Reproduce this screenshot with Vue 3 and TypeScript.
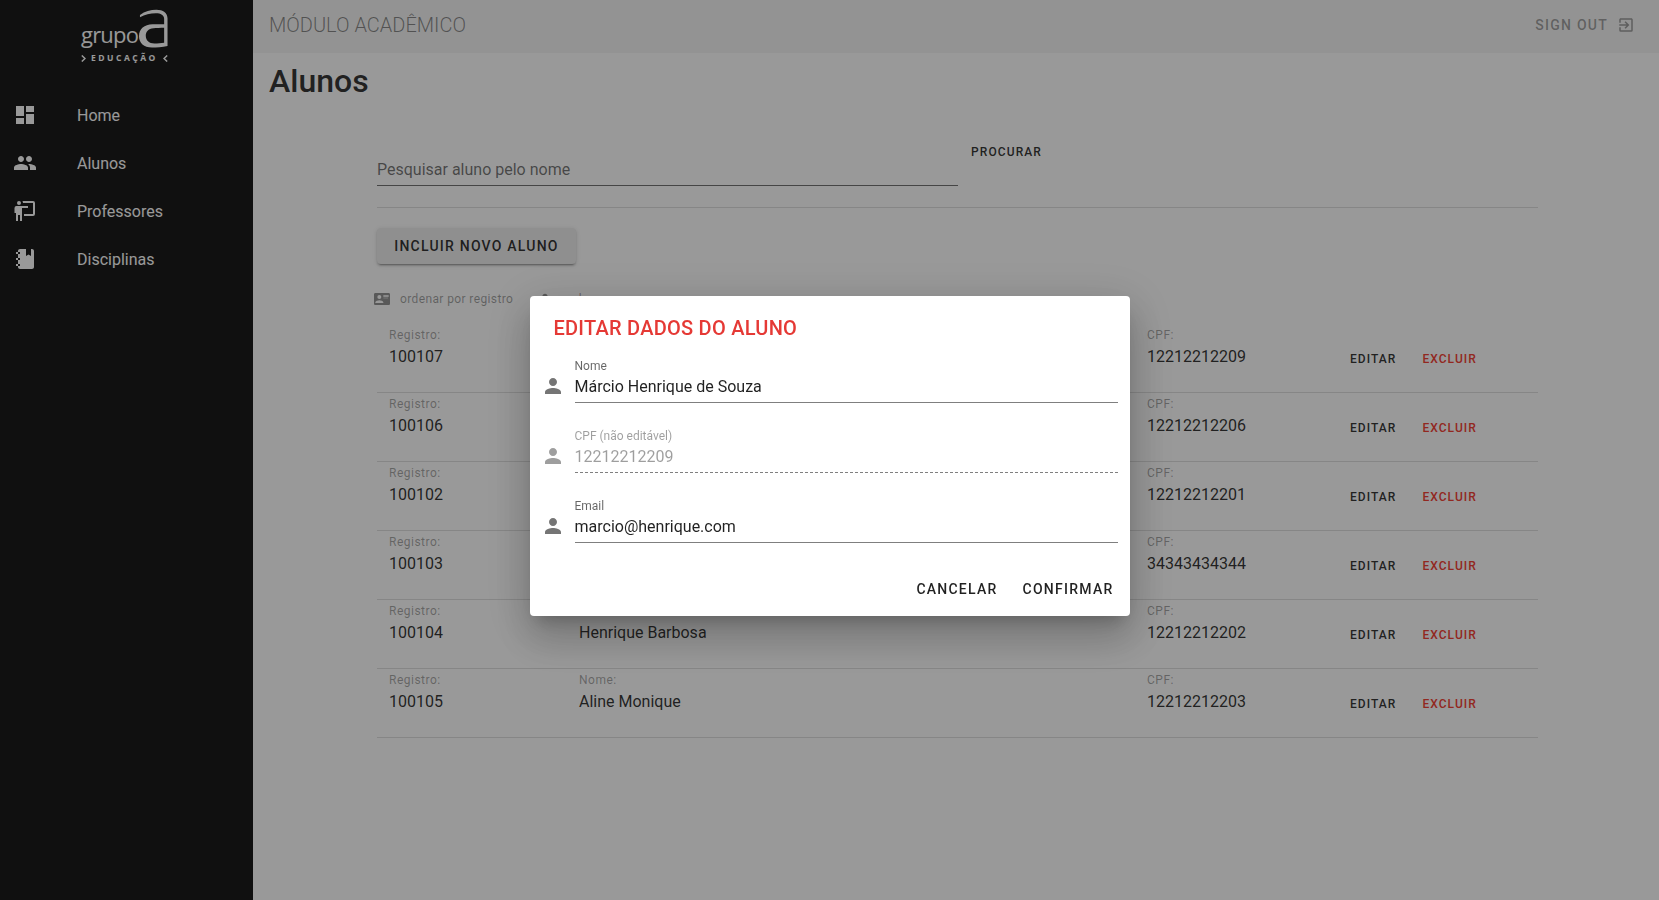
<script setup lang="ts">
import { ref } from "vue";

const menu = [
  { label: "Home", icon: "M3 13h8V3H3v10zm0 8h8v-6H3v6zm10 0h8V11h-8v10zm0-18v6h8V3h-8z" },
  { label: "Alunos", icon: "M16 11c1.66 0 2.99-1.34 2.99-3S17.66 5 16 5c-1.66 0-3 1.34-3 3s1.34 3 3 3zm-8 0c1.66 0 2.99-1.34 2.99-3S9.66 5 8 5C6.34 5 5 6.34 5 8s1.34 3 3 3zm0 2c-2.33 0-7 1.17-7 3.5V19h14v-2.5c0-2.33-4.67-3.5-7-3.5zm8 0c-.29 0-.62.02-.97.05 1.16.84 1.97 1.97 1.97 3.45V19h6v-2.5c0-2.33-4.67-3.5-7-3.5z" },
  { label: "Professores", icon: "M20,17A2,2 0 0,0 22,15V4A2,2 0 0,0 20,2H9.46C9.81,2.61 10,3.3 10,4H20V15H11V17M15,7V9H9V22H7V16H5V22H3V14H1.5V9A2,2 0 0,1 3.5,7H15M8,4A2,2 0 0,1 6,6A2,2 0 0,1 4,4A2,2 0 0,1 6,2A2,2 0 0,1 8,4Z" },
  { label: "Disciplinas", icon: "M3,7V5H5V4C5,2.89 5.9,2 7,2H13V9L15.5,7.5L18,9V2H19C20.05,2 21,2.95 21,4V20C21,21.05 20.05,22 19,22H7C5.95,22 5,21.05 5,20V19H3V17H5V13H3V11H5V7H3M7,11H5V13H7V11M7,7V5H5V7H7M7,19V17H5V19H7Z" },
];

const personIcon = "M12 12c2.21 0 4-1.79 4-4s-1.79-4-4-4-4 1.79-4 4 1.79 4 4 4zm0 2c-2.67 0-8 1.34-8 4v2h16v-2c0-2.66-5.33-4-8-4z";
const cardIcon = "M2,3H22C23.05,3 24,3.95 24,5V19C24,20.05 23.05,21 22,21H2C0.95,21 0,20.05 0,19V5C0,3.95 0.95,3 2,3M14,6V7H22V6H14M14,8V9H21.5L22,9V8H14M14,10V11H21V10H14M8,13.91C6,13.91 2,15 2,17V18H14V17C14,15 10,13.91 8,13.91M8,6A3,3 0 0,0 5,9A3,3 0 0,0 8,12A3,3 0 0,0 11,9A3,3 0 0,0 8,6Z";
const exitIcon = "M19,3H5C3.89,3 3,3.89 3,5V9H5V5H19V19H5V15H3V19A2,2 0 0,0 5,21H19A2,2 0 0,0 21,19V5C21,3.89 20.1,3 19,3M10.08,15.58L11.5,17L16.5,12L11.5,7L10.08,8.41L12.67,11H3V13H12.67L10.08,15.58Z";

const alunos = [
  { registro: 100107, nome: "Márcio Henrique de Souza", cpf: "12212212209" },
  { registro: 100106, nome: "Carla Regina", cpf: "12212212206" },
  { registro: 100102, nome: "Maria Helena", cpf: "12212212201" },
  { registro: 100103, nome: "João Carlos", cpf: "34343434344" },
  { registro: 100104, nome: "Henrique Barbosa", cpf: "12212212202" },
  { registro: 100105, nome: "Aline Monique", cpf: "12212212203" },
];

const nome = ref("Márcio Henrique de Souza");
const email = ref("marcio@henrique.com");
</script>

<template>
  <div class="shell">
    <aside class="sidebar">
      <div class="logo">
        <div class="logo-top">
          <span class="logo-grupo">grupo</span>
          <svg class="logo-a" width="29" height="40" viewBox="0 0 30 40">
            <path fill-rule="evenodd" d="M1 5.5C6 1.5 12 0 18 0C25 0 29.5 3.5 29.5 9V37.6C24 38.6 18 39.2 13.5 39.2C5 39.2 0 34.5 0 27.5C0 20 5.5 15.6 14 15.2C18 15 22 15 26 15V9.5C26 5.5 22.5 3.6 17.5 3.6C11.5 3.6 6 5 1 7.8ZM26 18.6C22 18.6 18 18.8 15 19.2C9.5 19.8 7 22.8 7 27C7 31.6 10.2 35 16 35C19.5 35 23 34.7 26 34.2Z" />
          </svg>
        </div>
        <div class="logo-sub">
          <svg width="5" height="7" viewBox="0 0 5 7"><path d="M0.8 0.5L4 3.5L0.8 6.5" /></svg>
          <span>EDUCAÇÃO</span>
          <svg width="5" height="7" viewBox="0 0 5 7"><path d="M4.2 0.5L1 3.5L4.2 6.5" /></svg>
        </div>
      </div>
      <nav class="menu">
        <a v-for="item in menu" :key="item.label" class="menu-item">
          <svg class="menu-icon" viewBox="0 0 24 24"><path :d="item.icon" /></svg>
          <span>{{ item.label }}</span>
        </a>
      </nav>
    </aside>

    <div class="main">
      <header class="appbar">
        <span class="appbar-title">MÓDULO ACADÊMICO</span>
        <button class="signout">
          SIGN OUT
          <svg viewBox="0 0 24 24"><path :d="exitIcon" /></svg>
        </button>
      </header>

      <section class="page">
        <h1>Alunos</h1>

        <div class="content">
          <div class="search">
            <div class="search-field">Pesquisar aluno pelo nome</div>
            <button class="search-btn">PROCURAR</button>
          </div>

          <button class="add-btn">INCLUIR NOVO ALUNO</button>

          <div class="sort">
            <span class="sort-item"><svg viewBox="0 0 24 24"><path :d="cardIcon" /></svg>ordenar por registro</span>
            <span class="sort-item"><svg viewBox="0 0 24 24"><path :d="personIcon" /></svg>ordenar por nome</span>
          </div>

          <div class="list">
            <div v-for="a in alunos" :key="a.registro" class="row">
              <div class="col col-reg">
                <label>Registro:</label>
                <p>{{ a.registro }}</p>
              </div>
              <div class="col col-nome">
                <label>Nome:</label>
                <p>{{ a.nome }}</p>
              </div>
              <div class="col col-cpf">
                <label>CPF:</label>
                <p>{{ a.cpf }}</p>
              </div>
              <div class="actions">
                <button class="link">EDITAR</button>
                <button class="link danger">EXCLUIR</button>
              </div>
            </div>
          </div>
        </div>
      </section>
    </div>

    <div class="backdrop">
      <div class="dialog">
        <h2>EDITAR DADOS DO ALUNO</h2>

        <div class="field">
          <svg viewBox="0 0 24 24"><path :d="personIcon" /></svg>
          <div class="field-body">
            <label>Nome</label>
            <input v-model="nome" />
          </div>
        </div>
        <div class="field disabled">
          <svg viewBox="0 0 24 24"><path :d="personIcon" /></svg>
          <div class="field-body">
            <label>CPF (não editável)</label>
            <input value="12212212209" disabled />
          </div>
        </div>
        <div class="field">
          <svg viewBox="0 0 24 24"><path :d="personIcon" /></svg>
          <div class="field-body">
            <label>Email</label>
            <input v-model="email" />
          </div>
        </div>

        <div class="dialog-actions">
          <button>CANCELAR</button>
          <button>CONFIRMAR</button>
        </div>
      </div>
    </div>
  </div>
</template>

<style scoped>
  .shell {
    display: flex;
    height: 900px;
    overflow: hidden;
    background: #fff;
    font-family: Roboto, "Liberation Sans", sans-serif;
  }

  button {
    font-family: inherit;
    background: none;
    border: none;
    padding: 0;
    cursor: pointer;
  }

  .sidebar {
    width: 253px;
    flex-shrink: 0;
    background: #1c1c1c;
    color: #fff;
  }

  .logo {
    height: 91px;
    padding: 9px 0 0 81px;
    box-sizing: border-box;
  }

  .logo-top {
    display: flex;
    align-items: flex-end;
    gap: 2px;
    height: 40px;
  }

  .logo-grupo {
    width: 56px;
    font-family: "Open Sans", sans-serif;
    font-weight: 400;
    font-size: 22px;
    line-height: 30px;
    letter-spacing: -0.8px;
    color: #fff;
  }

  .logo-a {
    fill: #fff;
    flex-shrink: 0;
  }

  .logo-sub {
    display: flex;
    align-items: center;
    gap: 5px;
    width: 87px;
    margin-top: 3px;
    font-family: "Open Sans", sans-serif;
    font-size: 8.5px;
    font-weight: 700;
    line-height: 12px;
    letter-spacing: 2.5px;
  }

  .logo-sub svg {
    fill: none;
    stroke: #fff;
    stroke-width: 1.5;
    flex-shrink: 0;
  }

  .menu {
    display: flex;
    flex-direction: column;
  }

  .menu-item {
    display: flex;
    align-items: center;
    height: 48px;
    padding-left: 13px;
    font-size: 16px;
    color: #fff;
  }

  .menu-icon {
    width: 24px;
    height: 24px;
    margin-right: 40px;
    fill: #fff;
  }

  .main {
    flex: 1;
    min-width: 0;
    display: flex;
    flex-direction: column;
  }

  .appbar {
    height: 53px;
    flex-shrink: 0;
    display: flex;
    align-items: center;
    justify-content: space-between;
    padding: 0 16px 4px;
    box-sizing: border-box;
    background: #f5f5f5;
  }

  .appbar-title {
    font-size: 20px;
    font-weight: 300;
    color: rgba(0, 0, 0, 0.45);
  }

  .signout {
    display: flex;
    align-items: center;
    gap: 9px;
    padding-right: 8px;
    font-size: 14px;
    font-weight: 500;
    letter-spacing: 1.25px;
    color: rgba(0, 0, 0, 0.36);
  }

  .signout svg {
    width: 18px;
    height: 18px;
    fill: rgba(0, 0, 0, 0.36);
  }

  .page {
    padding: 0 16px;
  }

  h1 {
    margin: 8px 0 0;
    font-size: 32px;
    font-weight: 500;
    line-height: 40px;
    color: rgba(0, 0, 0, 0.8);
  }

  .content {
    width: 1161px;
    margin: 38px 0 0 108px;
  }

  .search {
    display: flex;
    align-items: flex-start;
    padding-bottom: 21px;
    border-bottom: 1px solid rgba(0, 0, 0, 0.12);
  }

  .search-field {
    width: 581px;
    height: 47px;
    box-sizing: border-box;
    padding-top: 21px;
    font-size: 16px;
    line-height: 20px;
    color: rgba(0, 0, 0, 0.55);
    border-bottom: 1px solid rgba(0, 0, 0, 0.55);
  }

  .search-btn {
    margin: 5px 0 0 13px;
    font-size: 12px;
    font-weight: 500;
    line-height: 16px;
    letter-spacing: 1.1px;
    color: rgba(0, 0, 0, 0.8);
  }

  .add-btn {
    display: block;
    width: 199px;
    height: 36px;
    margin-top: 20px;
    border-radius: 4px;
    background: #eeeeee;
    font-size: 14px;
    font-weight: 500;
    letter-spacing: 1.22px;
    color: rgba(0, 0, 0, 0.8);
    box-shadow: 0 3px 1px -2px rgba(0, 0, 0, 0.2), 0 2px 2px 0 rgba(0, 0, 0, 0.14), 0 1px 5px 0 rgba(0, 0, 0, 0.12);
  }

  .sort {
    display: flex;
    gap: 24px;
    margin: 27px 0 0 -3px;
    height: 16px;
  }

  .sort-item {
    display: flex;
    align-items: center;
    gap: 10px;
    font-size: 12px;
    letter-spacing: 0.38px;
    color: rgba(0, 0, 0, 0.38);
  }

  .sort-item svg {
    width: 16px;
    height: 16px;
    fill: rgba(0, 0, 0, 0.42);
  }

  .list {
    margin-top: 17px;
  }

  .row {
    display: flex;
    height: 69px;
    box-sizing: border-box;
    padding: 3px 0 0 12px;
    border-bottom: 1px solid rgba(0, 0, 0, 0.12);
  }

  .col label {
    display: block;
    font-size: 12px;
    line-height: 16px;
    letter-spacing: 0.5px;
    color: rgba(0, 0, 0, 0.36);
  }

  .col p {
    margin: 2px 0 0;
    font-size: 16px;
    line-height: 24px;
    color: rgba(0, 0, 0, 0.8);
  }

  .col-reg { width: 190px; }
  .col-nome { width: 568px; }
  .col-cpf { width: 203px; }

  .actions {
    display: flex;
    gap: 26px;
    padding-top: 24px;
    align-items: flex-start;
  }

  .link {
    font-size: 12px;
    font-weight: 500;
    line-height: 16px;
    letter-spacing: 1.05px;
    color: rgba(0, 0, 0, 0.8);
  }

  .link.danger {
    color: #f44336;
  }

  .backdrop {
    position: fixed;
    inset: 0;
    display: flex;
    justify-content: center;
    align-items: flex-start;
    padding-top: 296px;
    box-sizing: border-box;
    background: rgba(0, 0, 0, 0.4);
  }

  .dialog {
    width: 600px;
    height: 320px;
    box-sizing: border-box;
    padding: 16px 12px 0 11px;
    background: #fff;
    border-radius: 4px;
    box-shadow: 0 11px 15px -7px rgba(0, 0, 0, 0.2), 0 24px 38px 3px rgba(0, 0, 0, 0.14), 0 9px 46px 8px rgba(0, 0, 0, 0.12);
  }

  h2 {
    margin: 0 0 0 13px;
    font-size: 20px;
    font-weight: 500;
    line-height: 32px;
    letter-spacing: 0.25px;
    color: #e53935;
  }

  .field {
    display: flex;
    align-items: flex-end;
    gap: 10px;
    margin-top: 2px;
    height: 57px;
  }

  .field + .field {
    margin-top: 13px;
  }

  .field > svg {
    width: 24px;
    height: 24px;
    margin-bottom: 5px;
    fill: rgba(0, 0, 0, 0.54);
    flex-shrink: 0;
  }

  .field-body {
    flex: 1;
    min-width: 0;
  }

  .field-body label {
    display: block;
    font-size: 12px;
    line-height: 14px;
    color: rgba(0, 0, 0, 0.6);
  }

  .field-body input {
    display: block;
    width: 100%;
    box-sizing: border-box;
    height: 27px;
    padding: 0 0 6px;
    margin-top: 3px;
    border: none;
    outline: none;
    border-bottom: 1px solid rgba(0, 0, 0, 0.5);
    background: none;
    font-family: inherit;
    font-size: 16px;
    color: rgba(0, 0, 0, 0.87);
  }

  .field.disabled > svg {
    fill: rgba(0, 0, 0, 0.38);
  }

  .field.disabled label,
  .field.disabled input {
    color: rgba(0, 0, 0, 0.38);
  }

  .field.disabled input {
    border-bottom: 1px dashed rgba(0, 0, 0, 0.5);
  }

  .dialog-actions {
    display: flex;
    justify-content: flex-end;
    gap: 25px;
    margin-top: 36px;
    padding-right: 4px;
  }

  .dialog-actions button {
    font-size: 14px;
    font-weight: 500;
    line-height: 20px;
    letter-spacing: 1.25px;
    color: rgba(0, 0, 0, 0.87);
  }
</style>

<style>
  html, body {
    margin: 0;
    overflow: hidden;
  }
</style>
